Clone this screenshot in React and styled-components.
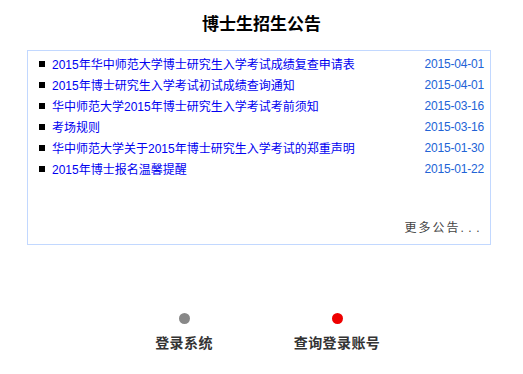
import React from "react";
import styled, { createGlobalStyle } from "styled-components";

const Global = createGlobalStyle`
  html, body { margin: 0; padding: 0; background: #fff; }
  body { font-family: "Liberation Sans", "Noto Sans CJK SC", sans-serif; }
`;

const Page = styled.div`
  width: 523px;
  height: 374px;
  display: flex;
  flex-direction: column;
`;

const Title = styled.h1`
  margin: 0;
  padding-top: 15px;
  height: 20px;
  line-height: 20px;
  font-size: 17px;
  font-weight: bold;
  color: #000;
  text-align: center;
`;

const Box = styled.div`
  margin: 15px 32px 0 27px;
  height: 195px;
  box-sizing: border-box;
  border: 1px solid #c2d8ff;
  display: flex;
  flex-direction: column;
`;

const List = styled.ul`
  list-style: none;
  margin: 0;
  padding: 2px 6px 0 11px;
`;

const Row = styled.li`
  display: flex;
  align-items: center;
  height: 21px;
  font-size: 12px;
`;

const Bullet = styled.span`
  width: 6px;
  height: 6px;
  background: #000;
  flex: none;
  margin-right: 7px;
`;

const Link = styled.a`
  color: #0000f0;
  text-decoration: none;
  flex: 1;
  white-space: nowrap;
`;

const DateText = styled.span`
  color: #2263d6;
  flex: none;
  letter-spacing: -0.2px;
`;

const More = styled.div`
  margin-top: auto;
  padding: 0 6px 6px 0;
  text-align: right;
  font-size: 12px;
  line-height: 20px;
  color: #444;
  letter-spacing: 2px;
`;

const Dots = styled.span`
  letter-spacing: 4.5px;
`;

const Actions = styled.div`
  display: flex;
  justify-content: center;
  gap: 53px;
  margin-top: 68px;
  padding-right: 2px;
`;

const Action = styled.div`
  width: 100px;
  display: flex;
  flex-direction: column;
  align-items: center;
  gap: 10px;
`;

const Dot = styled.span`
  width: 11px;
  height: 11px;
  border-radius: 50%;
  background: ${(p) => p.$color};
`;

const Label = styled.span`
  font-size: 14px;
  font-weight: bold;
  line-height: 18px;
  color: #333;
  letter-spacing: 0.4px;
`;

const items = [
  ["2015年华中师范大学博士研究生入学考试成绩复查申请表", "2015-04-01"],
  ["2015年博士研究生入学考试初试成绩查询通知", "2015-04-01"],
  ["华中师范大学2015年博士研究生入学考试考前须知", "2015-03-16"],
  ["考场规则", "2015-03-16"],
  ["华中师范大学关于2015年博士研究生入学考试的郑重声明", "2015-01-30"],
  ["2015年博士报名温馨提醒", "2015-01-22"],
];

export default function App() {
  return (
    <Page>
      <Global />
      <Title>博士生招生公告</Title>
      <Box>
        <List>
          {items.map(([t, d]) => (
            <Row key={t}>
              <Bullet />
              <Link href="#">{t}</Link>
              <DateText>{d}</DateText>
            </Row>
          ))}
        </List>
        <More>
          更多公告<Dots>...</Dots>
        </More>
      </Box>
      <Actions>
        <Action>
          <Dot $color="#888888" />
          <Label>登录系统</Label>
        </Action>
        <Action>
          <Dot $color="#ee0000" />
          <Label>查询登录账号</Label>
        </Action>
      </Actions>
    </Page>
  );
}
